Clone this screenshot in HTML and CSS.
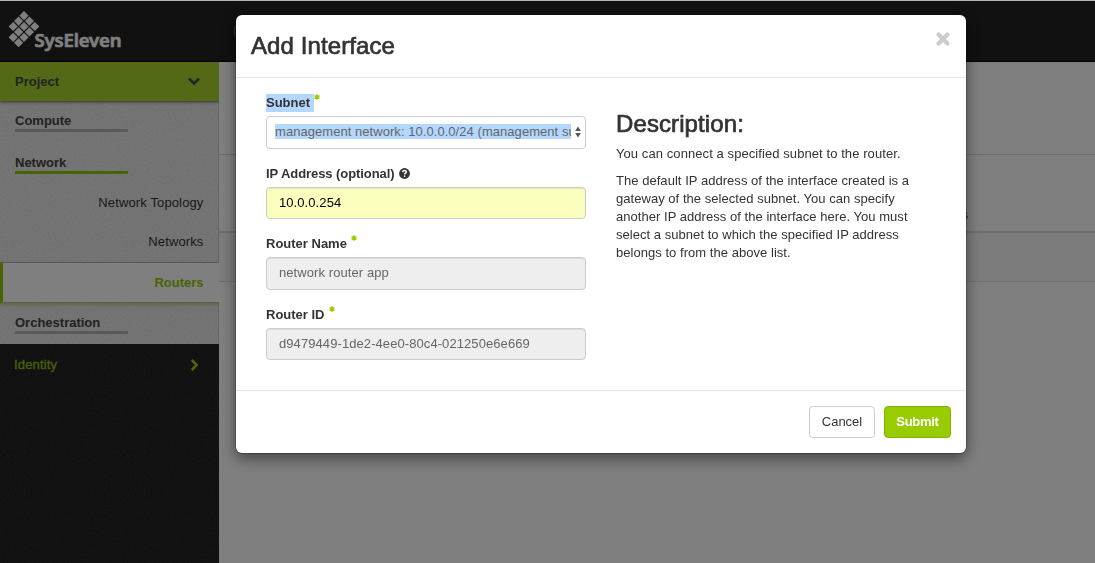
FILE: index.html
```html
<!DOCTYPE html>
<html lang="en">
<head>
<meta charset="utf-8">
<title>Add Interface</title>
<link rel="stylesheet" href="styles.css">
</head>
<body>
<div class="page">
  <header class="topbar">
    <svg class="brand" width="130" height="60" viewBox="0 0 130 60">
      <g fill="#ffffff">
        <path id="d" d="M24 10.1l4.6 4.6-4.6 4.6-4.6-4.6z"/>
        <use href="#d" x="-5.4" y="5.4"/><use href="#d" x="5.4" y="5.4"/>
        <use href="#d" x="-10.8" y="10.8"/><use href="#d" y="10.8"/><use href="#d" x="10.8" y="10.8"/>
        <use href="#d" x="-5.4" y="16.2"/><use href="#d" x="5.4" y="16.2"/>
        <use href="#d" x="-10.8" y="21.6"/><use href="#d" y="21.6"/>
        <use href="#d" x="-5.4" y="27"/>
      </g>
      <text class="brand-name" x="34.5" y="45.5" textLength="87">SysEleven</text>
    </svg>
    <span class="switcher"></span>
  </header>
  <div class="columns">
    <nav class="sidebar">
      <div class="panel-head">Project
        <svg width="14" height="9" viewBox="0 0 14 9"><path d="M2 1.6l5 4.8 5-4.8" fill="none" stroke="#444" stroke-width="2.6"/></svg>
      </div>
      <div class="group compute"><span>Compute</span></div>
      <div class="group network"><span>Network</span></div>
      <a class="link">Network Topology</a>
      <a class="link">Networks</a>
      <a class="link current">Routers</a>
      <div class="group orchestration"><span>Orchestration</span></div>
      <div class="identity">Identity
        <svg width="9" height="14" viewBox="0 0 9 14"><path d="M1.8 2l4.8 5-4.8 5" fill="none" stroke="#98cc00" stroke-width="2.6"/></svg>
      </div>
    </nav>
    <main class="content">
      <div class="row title"></div>
      <div class="row heading"><a>s</a></div>
      <div class="row footer"></div>
    </main>
  </div>
</div>
<div class="backdrop">
  <section class="modal">
    <div class="modal-head">
      <h3>Add Interface</h3>
      <svg class="close" width="14" height="14" viewBox="0 0 14 14"><path d="M2.6 2.6l8.8 8.8M11.4 2.6l-8.8 8.8" stroke="#ccc" stroke-width="4.2" stroke-linecap="round"/></svg>
    </div>
    <div class="modal-body">
      <form class="fields">
        <div class="field">
          <label><span class="marked">Subnet </span><svg class="star" viewBox="0 0 6 6"><path d="M3 .3v5.4M.5 1.6l5 2.8M.5 4.4l5-2.8"/></svg></label>
          <div class="control select"><span class="value"><span class="marked">management network: 10.0.0.0/24 (management su</span></span>
            <svg width="6" height="12" viewBox="0 0 6 12"><path d="M3 .5l2.8 4.6H.2zM3 11.5l2.8-4.6H.2z" fill="#555"/></svg>
          </div>
        </div>
        <div class="field">
          <label><span class="tight">IP Address (optional)</span><svg class="help" width="11" height="11" viewBox="0 0 11 11"><circle cx="5.5" cy="5.5" r="5.4" fill="#333"/><path d="M3.7 4.1c.1-2 3.6-2 3.6-.1 0 1.3-1.7 1.1-1.7 2.5M5.6 7.5v1.4" fill="none" stroke="#fff" stroke-width="1.5"/></svg></label>
          <div class="control filled">10.0.0.254</div>
        </div>
        <div class="field">
          <label><span>Router Name</span><svg class="star" viewBox="0 0 6 6"><path d="M3 .3v5.4M.5 1.6l5 2.8M.5 4.4l5-2.8"/></svg></label>
          <div class="control disabled">network router app</div>
        </div>
        <div class="field">
          <label><span>Router ID</span><svg class="star" viewBox="0 0 6 6"><path d="M3 .3v5.4M.5 1.6l5 2.8M.5 4.4l5-2.8"/></svg></label>
          <div class="control disabled short">d9479449-1de2-4ee0-80c4-021250e6e669</div>
        </div>
      </form>
      <div class="description">
        <h3>Description:</h3>
        <p>You can connect a specified subnet to the router.</p>
        <p class="details">The default IP address of the interface created is a<br>gateway of the selected subnet. You can specify<br>another IP address of the interface here. You must<br>select a subnet to which the specified IP address<br>belongs to from the above list.</p>
      </div>
    </div>
    <div class="modal-foot">
      <button class="btn">Cancel</button>
      <button class="btn primary">Submit</button>
    </div>
  </section>
</div>
</body>
</html>
```
FILE: styles.css
```css
* { box-sizing: border-box; }
body {
  margin: 0;
  font: 13px/18px "Liberation Sans", Arial, sans-serif;
  color: #333;
  overflow: hidden;
}
.page { height: 563px; display: flex; flex-direction: column; border-top: 1px solid #b3b5b5; }
.topbar { height: 61px; flex: none; display: flex; background: #222; border-bottom: 1px solid #000; }
.brand { display: block; }
.brand-name { font: 600 18.5px "Noto Sans", "Open Sans", sans-serif; fill: #fff; stroke: #fff; stroke-width: .7px; }
.switcher { width: 120px; height: 11px; margin: 24px 0 0 104px; border: 1px solid #666; border-radius: 2px; }
.columns { flex: 1; display: flex; }
.sidebar {
  width: 219px;
  display: flex;
  flex-direction: column;
  background-color: #f6f6f6;
  background-image: url("data:image/svg+xml,%3Csvg xmlns='http://www.w3.org/2000/svg' width='120' height='120'%3E%3Cfilter id='n'%3E%3CfeTurbulence type='fractalNoise' baseFrequency='.7' numOctaves='2' stitchTiles='stitch'/%3E%3CfeColorMatrix values='0 0 0 0 0 0 0 0 0 0 0 0 0 0 0 0 0 0 .12 0'/%3E%3C/filter%3E%3Crect width='120' height='120' filter='url(%23n)'/%3E%3C/svg%3E");
  box-shadow: inset -1px 0 0 #c8c8c8;
}
.panel-head {
  height: 39px;
  flex: none;
  padding: 0 18px 0 15px;
  display: flex;
  align-items: center;
  justify-content: space-between;
  background: #a8d22c;
  color: #444;
  font-weight: bold;
  box-shadow: 0 1px 3px rgba(0,0,0,.6);
}
.group { flex: none; padding: 0 15px; font-weight: bold; color: #444; }
.group span { display: block; width: 113px; height: 20px; border-bottom: 3px solid #b4b4b4; }
.compute { padding-top: 11px; height: 53px; }
.network span { border-color: #90c800; }
.network { height: 29px; }
.link { flex: none; height: 39px; padding: 11px 15.5px 0; text-align: right; letter-spacing: .13px; }
.link.current {
  height: 41px;
  margin-top: 1px;
  border: 1px solid #b4b4b4;
  border-left: 3px solid #90c800;
  border-right: 0;
  background: #fff;
  color: #90c800;
  font-weight: bold;
  letter-spacing: 0;
  box-shadow: 0 2px 3px rgba(144,200,0,.5);
}
.orchestration { height: 41px; padding-top: 11px; }
.identity {
  flex: 1;
  display: flex;
  justify-content: space-between;
  align-items: flex-start;
  padding: 12px 20px 0 14px;
  color: #90c800;
  letter-spacing: .15px;
  -webkit-text-stroke: .3px #90c800;
  background-color: #303030;
  background-image: url("data:image/svg+xml,%3Csvg xmlns='http://www.w3.org/2000/svg' width='120' height='120'%3E%3Cfilter id='n'%3E%3CfeTurbulence type='fractalNoise' baseFrequency='.7' numOctaves='2' stitchTiles='stitch'/%3E%3CfeColorMatrix values='0 0 0 0 0 0 0 0 0 0 0 0 0 0 0 0 0 0 .5 0'/%3E%3C/filter%3E%3Crect width='120' height='120' filter='url(%23n)'/%3E%3C/svg%3E");
}
.identity svg { margin-top: 2px; }
.content { flex: 1; background: #fff; }
.row { border-bottom: 1px solid #ddd; }
.title { height: 93px; }
.heading { height: 78px; padding: 51px 127px 0 0; border-bottom-width: 2px; text-align: right; color: #0a6a9c; }
.footer { height: 49px; background: #f9f9f9; }
.backdrop { position: fixed; inset: 1px 0 0; background: rgba(0,0,0,.5); }
.modal {
  width: 730px;
  margin: 14px 0 0 236px;
  height: 438px;
  display: flex;
  flex-direction: column;
  background: #fff;
  border-radius: 6px;
  box-shadow: 0 5px 15px rgba(0,0,0,.5), 0 0 0 1px rgba(0,0,0,.2);
}
.modal-head {
  height: 63px;
  display: flex;
  justify-content: space-between;
  align-items: flex-start;
  padding: 17px 16px 0 15px;
  border-bottom: 1px solid #e5e5e5;
}
h3 { margin: 0; font-size: 24px; line-height: 28px; font-weight: 500; letter-spacing: .1px; -webkit-text-stroke: .7px #333; }
.modal-body { flex: 1; display: flex; gap: 30px; padding: 16px 30px 0; }
.fields { width: 320px; }
.field { height: 70.5px; }
.field label { display: flex; align-items: center; height: 18px; font-weight: bold; white-space: pre; }
.marked { background: #b3d7ff; }
.tight { letter-spacing: -.07px; }
.star { width: 6px; height: 6px; margin: -12px 0 0 4px; stroke: #98cc00; stroke-width: 1.6; }
.marked + .star { margin-left: 0; }
.help { margin-left: 4px; }
.control {
  height: 33px;
  margin-top: 4px;
  padding: 6px 12px;
  border: 1px solid #ccc;
  border-radius: 4px;
  box-shadow: inset 0 1px 1px rgba(0,0,0,.075);
  white-space: nowrap;
  letter-spacing: .08px;
}
.select { display: flex; justify-content: space-between; align-items: center; padding: 0 4px 2px 8px; color: #666; box-shadow: none; }
.value { width: 296px; overflow: hidden; letter-spacing: .05px; }
.filled { height: 32px; background: #faffbd; color: #000; }
.disabled { background: #eee; color: #666; }
.short { height: 32px; }
.description { width: 320px; padding-top: 16px; letter-spacing: .08px; }
.description p { margin: 7px 0 9px; }
.description .details { margin-top: 0; letter-spacing: .04px; }
.modal-foot {
  height: 63px;
  display: flex;
  justify-content: flex-end;
  gap: 9px;
  padding: 15px;
  border-top: 1px solid #e5e5e5;
}
.btn {
  width: 66px;
  height: 32px;
  padding: 0;
  border: 1px solid #ccc;
  border-radius: 4px;
  background: #fff;
  color: #333;
  font: inherit;
}
.primary { width: 67px; background: #98cc00; border-color: #85b200; color: #fff; font-weight: bold; letter-spacing: -.3px; }
```
